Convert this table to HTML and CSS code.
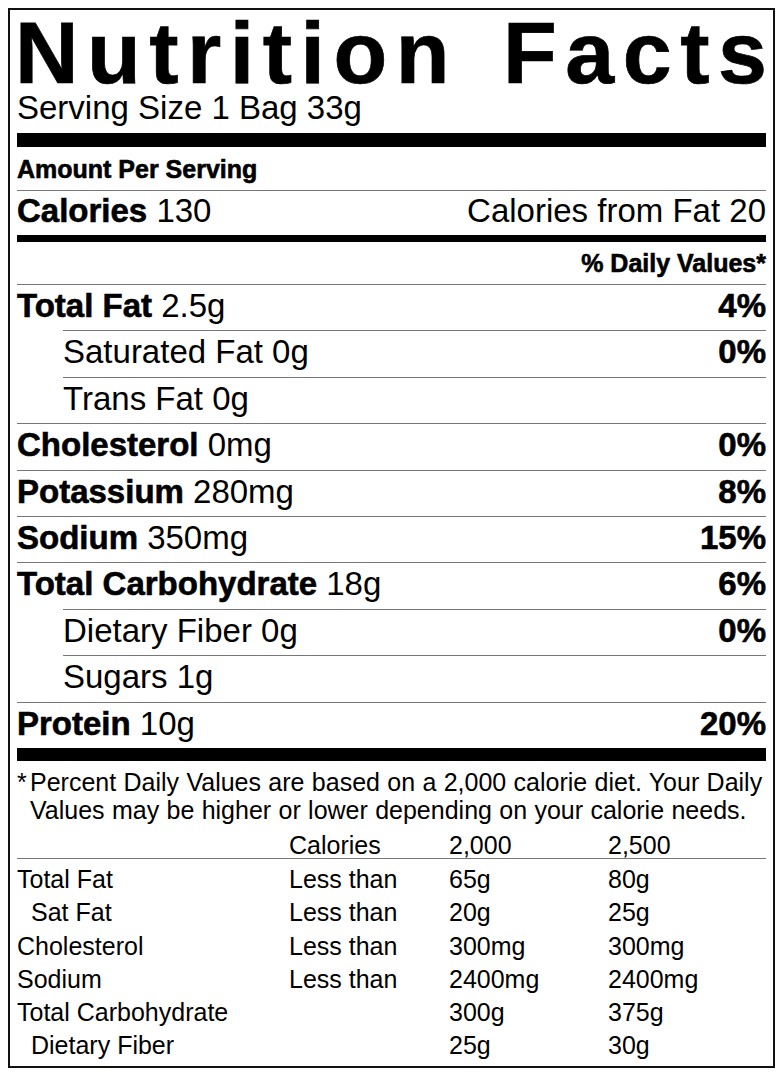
FILE: index.html
```html
<!DOCTYPE html>
<html>
<head>
<meta charset="utf-8">
<link rel="stylesheet" href="styles.css">
</head>
<body>
<div class="label">
  <div class="title">Nutrition Facts</div>
  <div class="serving">Serving Size 1 Bag 33g</div>
  <div class="bar bar-lg"></div>
  <div class="amount">Amount Per Serving</div>
  <div class="calories">
    <span><b>Calories</b> 130</span>
    <span>Calories from Fat 20</span>
  </div>
  <div class="bar bar-md"></div>
  <div class="dv-head">% Daily Values*</div>
  <div class="row"><span><b>Total Fat</b> 2.5g</span><b>4%</b></div>
  <div class="row sub"><span>Saturated Fat 0g</span><b>0%</b></div>
  <div class="row sub"><span>Trans Fat 0g</span></div>
  <div class="row"><span><b>Cholesterol</b> 0mg</span><b>0%</b></div>
  <div class="row"><span><b>Potassium</b> 280mg</span><b>8%</b></div>
  <div class="row"><span><b>Sodium</b> 350mg</span><b>15%</b></div>
  <div class="row"><span><b>Total Carbohydrate</b> 18g</span><b>6%</b></div>
  <div class="row sub"><span>Dietary Fiber 0g</span><b>0%</b></div>
  <div class="row sub"><span>Sugars 1g</span></div>
  <div class="row"><span><b>Protein</b> 10g</span><b>20%</b></div>
  <div class="bar bar-lg2"></div>
  <div class="footnote"><span class="star">*</span>Percent Daily Values are based on a 2,000 calorie diet. Your Daily Values may be higher or lower depending on your calorie needs.</div>
  <div class="dv-table">
    <div class="thead">
      <span></span><span>Calories</span><span>2,000</span><span>2,500</span>
    </div>
    <div class="trow"><span>Total Fat</span><span>Less than</span><span>65g</span><span>80g</span></div>
    <div class="trow"><span class="ind">Sat Fat</span><span>Less than</span><span>20g</span><span>25g</span></div>
    <div class="trow"><span>Cholesterol</span><span>Less than</span><span>300mg</span><span>300mg</span></div>
    <div class="trow"><span>Sodium</span><span>Less than</span><span>2400mg</span><span>2400mg</span></div>
    <div class="trow"><span>Total Carbohydrate</span><span></span><span>300g</span><span>375g</span></div>
    <div class="trow"><span class="ind">Dietary Fiber</span><span></span><span>25g</span><span>30g</span></div>
  </div>
</div>
</body>
</html>
```
FILE: styles.css
```css
html, body {
  margin: 0;
  padding: 0;
  background: #fff;
}
body {
  padding: 8px;
  font-family: "Liberation Sans", Arial, sans-serif;
  color: #000;
}
.label {
  border: 2px solid #111;
  padding: 0 7px 3px 7px;
}
b {
  font-weight: 700;
  -webkit-text-stroke: 0.6px #000;
}
.title {
  font-size: 88px;
  font-weight: 700;
  line-height: 84px;
  margin-top: 1px;
  margin-left: -2px;
  letter-spacing: 8.5px;
  word-spacing: 12px;
  white-space: nowrap;
  -webkit-text-stroke: 0.7px #000;
}
.serving {
  font-size: 33px;
  line-height: 26px;
}
.bar { background: #000; }
.bar-lg { height: 14px; margin-top: 12px; }
.bar-md { height: 7px; }
.bar-lg2 { height: 13px; }
.amount {
  font-size: 25px;
  font-weight: 700;
  -webkit-text-stroke: 0.6px #000;
  padding-top: 2px;
  line-height: 41px;
  border-bottom: 1px solid #777;
}
.calories {
  display: flex;
  justify-content: space-between;
  font-size: 33px;
  line-height: 39px;
  padding-bottom: 5px;
}
.dv-head {
  text-align: right;
  font-size: 25px;
  font-weight: 700;
  -webkit-text-stroke: 0.6px #000;
  line-height: 42px;
}
.row {
  display: flex;
  justify-content: space-between;
  font-size: 33px;
  line-height: 42.4px;
  padding-bottom: 3px;
  border-top: 1px solid #777;
}
.row.sub {
  margin-left: 46px;
}
.footnote {
  font-size: 25px;
  line-height: 28.3px;
  padding-top: 7px;
  padding-left: 13px;
  text-indent: -13px;
  word-spacing: 0.4px;
}
.star {
  display: inline-block;
  width: 13px;
  text-indent: 0;
}
.dv-table {
  font-size: 25px;
  margin-top: 8px;
}
.thead, .trow {
  display: grid;
  grid-template-columns: 272px 160px 159px 1fr;
}
.thead {
  line-height: 25.3px;
  border-bottom: 1px solid #777;
}
.trow {
  line-height: 33.3px;
}
.thead + .trow {
  margin-top: 4px;
}
.ind {
  padding-left: 14px;
}
```
